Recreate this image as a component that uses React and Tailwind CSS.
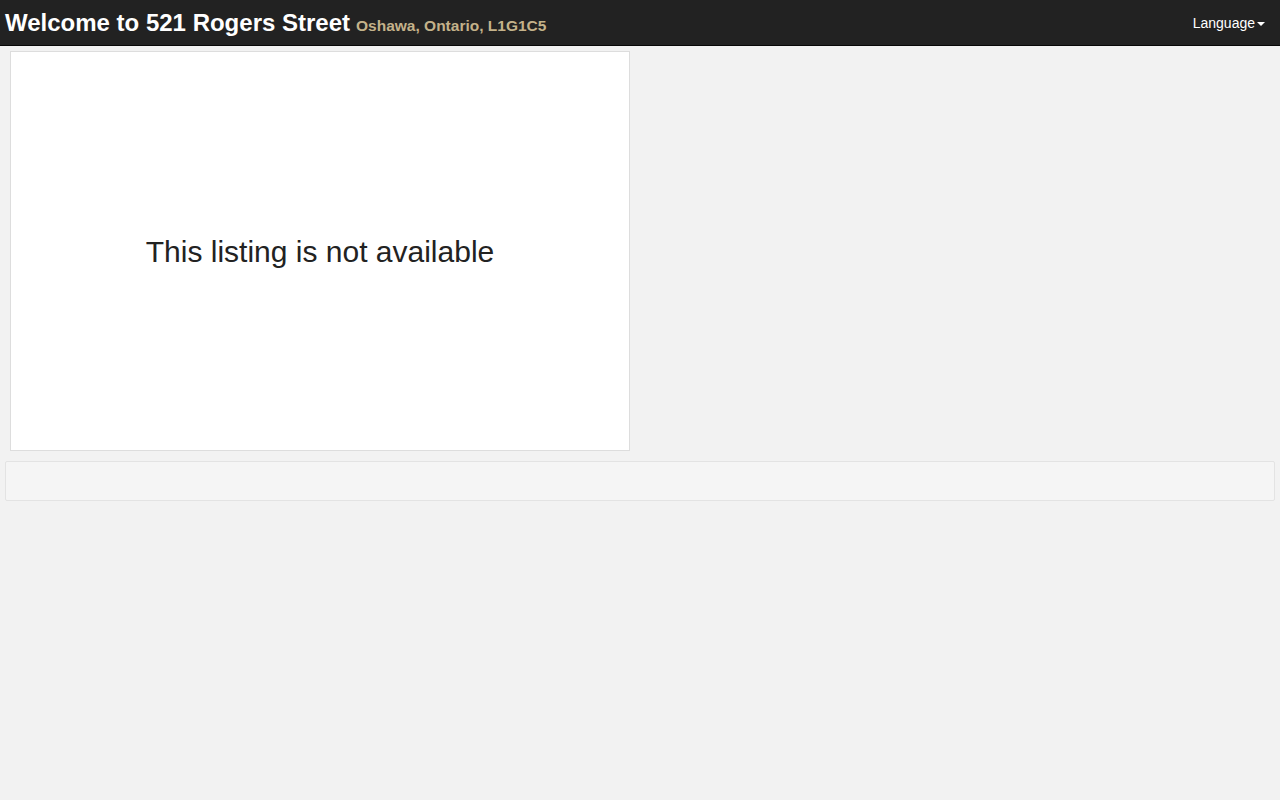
export default function App() {
  return (
    <div className="min-h-screen bg-[#f2f2f2] font-['Liberation_Sans',Arial,sans-serif]">
      {/* Navbar */}
      <nav className="h-[46px] bg-[#222222] border-b border-[#080808] flex items-center justify-between pl-[5px] pr-[15px]">
        <div className="flex items-baseline gap-[6px]">
          <span className="text-white text-[24px] font-bold leading-none">Welcome to 521 Rogers Street</span>
          <span className="text-[#c4b28a] text-[15.5px] font-bold leading-none">Oshawa, Ontario, L1G1C5</span>
        </div>
        <button className="flex items-center text-white text-[14px] pt-[2px]">
          Language
          <span className="ml-[2px] w-0 h-0 border-l-4 border-r-4 border-t-4 border-l-transparent border-r-transparent border-t-white" />
        </button>
      </nav>

      {/* Listing card */}
      <div className="px-[10px] pt-[5px]">
        <div className="w-[620px] h-[400px] bg-white border border-[#dddddd] flex items-center justify-center">
          <p className="text-[30px] text-[#222222]">This listing is not available</p>
        </div>
      </div>

      {/* Well */}
      <div className="px-[5px] pt-[10px]">
        <div className="h-[40px] bg-[#f5f5f5] border border-[#e3e3e3] rounded-[2px]" />
      </div>
    </div>
  );
}
